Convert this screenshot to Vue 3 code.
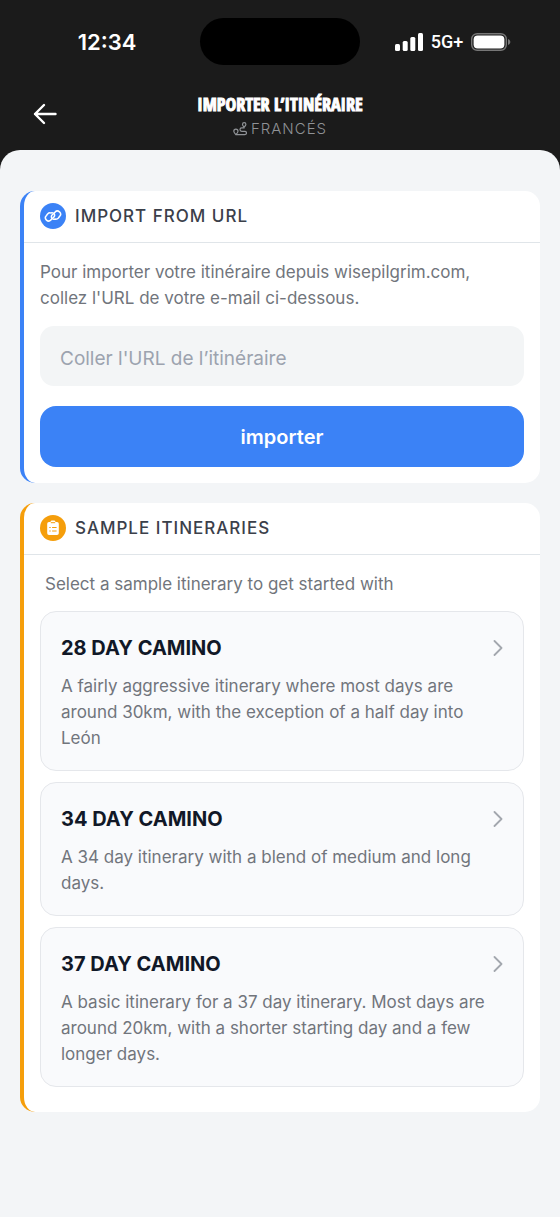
<script setup>
import { ref } from 'vue'

const url = ref('')
const samples = [
  {
    title: '28 DAY CAMINO',
    text: 'A fairly aggressive itinerary where most days are around 30km, with the exception of a half day into León',
  },
  {
    title: '34 DAY CAMINO',
    text: 'A 34 day itinerary with a blend of medium and long days.',
  },
  {
    title: '37 DAY CAMINO',
    text: 'A basic itinerary for a 37 day itinerary. Most days are around 20km, with a shorter starting day and a few longer days.',
  },
]
</script>

<template>
  <div class="screen">
    <div class="status">
      <div class="side clock"><span class="time">12:34</span></div>
      <div class="island"></div>
      <div class="side indicators">
        <svg width="28" height="18" viewBox="0 0 28 18" fill="#fff" aria-hidden="true">
          <rect x="0" y="11" width="5" height="7" rx="1.5" />
          <rect x="7.7" y="8" width="5" height="10" rx="1.5" />
          <rect x="15.3" y="4" width="5" height="14" rx="1.5" />
          <rect x="23" y="0" width="5" height="18" rx="1.5" />
        </svg>
        <span class="network">5G+</span>
        <svg width="40" height="18" viewBox="0 0 40 18" aria-hidden="true">
          <rect x="0.7" y="0.7" width="34.6" height="16.6" rx="5.5" fill="none" stroke="#777" stroke-width="1.4" />
          <rect x="2.6" y="2.6" width="30.8" height="12.8" rx="4" fill="#fff" />
          <path d="M37 6c1.500.5 2.300 1.600 2.300 3s-.8 2.500-2.300 3z" fill="#777" />
        </svg>
      </div>
    </div>

    <header class="nav">
      <button class="back" type="button" aria-label="Retour">
        <svg width="24" height="22" viewBox="0 0 24 22" fill="none" stroke="#fff" stroke-width="2.400" stroke-linecap="round" stroke-linejoin="round">
          <path d="M22.500 11H2M11 2 2 11l9 9" />
        </svg>
      </button>
      <div class="heading">
        <h1>IMPORTER L’ITINÉRAIRE</h1>
        <p class="route">
          <svg width="14" height="14" viewBox="0 0 14 14" fill="none" stroke="#8f9296" stroke-width="1.200" stroke-linecap="round" stroke-linejoin="round" aria-hidden="true">
            <path d="M11.100 5.200c-1-1.200-1.600-1.900-1.600-2.800a1.700 1.700 0 0 1 3.400 0c0 .9-.7 1.600-1.800 2.800zM2.900 12.700C1.600 11.200.8 10.300.8 9.200a2.100 2.100 0 0 1 4.200 0c0 1.100-.8 2-2.100 3.500zh8.900a1.700 1.700 0 0 0 0-3.400H8.700a1.700 1.700 0 0 1 0-3.400h2.400" />
          </svg>
          <span>FRANCÉS</span>
        </p>
      </div>
    </header>

    <main class="sheet">
      <section class="card blue">
        <div class="card-head">
          <span class="badge">
            <svg width="18" height="18" viewBox="0 0 18 18" fill="none" stroke="#fff" stroke-width="1.500" stroke-linecap="round" aria-hidden="true">
              <path d="M8.300 5.700 6.500 5.900A3.300 3.300 0 0 0 3.600 7L2.300 8.700a3.100 3.100 0 0 0 4.600 4.200l2.600-2.400a3.100 3.100 0 0 0 .2-4.300" />
              <path d="m9.700 12.300 1.800-.2a3.300 3.300 0 0 0 2.900-1.100l1.300-1.700a3.100 3.100 0 0 0-4.600-4.200L8.500 7.500a3.100 3.100 0 0 0-.2 4.300" />
            </svg>
          </span>
          <h2>IMPORT FROM URL</h2>
        </div>
        <form class="card-body" @submit.prevent>
          <label for="url">Pour importer votre itinéraire depuis wisepilgrim.com, collez l'URL de votre e-mail ci-dessous.</label>
          <input id="url" v-model="url" type="text" placeholder="Coller l'URL de l’itinéraire" />
          <button class="submit" type="submit">importer</button>
        </form>
      </section>

      <section class="card amber">
        <div class="card-head">
          <span class="badge">
            <svg width="18" height="18" viewBox="0 0 18 18" aria-hidden="true">
              <path d="M5 3h1.500c0-1 .8-1.500 1.500-1.500h2c.7 0 1.500.5 1.500 1.500H13a1.800 1.800 0 0 1 1.800 1.800v9.400A1.800 1.800 0 0 1 13 16H5a1.800 1.800 0 0 1-1.800-1.800V4.800A1.800 1.800 0 0 1 5 3z" fill="#fff" />
              <path d="M7.200 3.700h3.600M8.500 8.500h3.700M8.500 12h3.700M5.700 8.500h.6M5.700 12h.6" fill="none" stroke="#f59e0b" stroke-width="1" stroke-linecap="round" />
            </svg>
          </span>
          <h2>SAMPLE ITINERARIES</h2>
        </div>
        <div class="card-body samples">
          <p class="hint">Select a sample itinerary to get started with</p>
          <button v-for="s in samples" :key="s.title" class="sample" type="button">
            <span class="sample-title">
              <span>{{ s.title }}</span>
              <svg width="10" height="16" viewBox="0 0 10 16" fill="none" stroke="#a3a7ae" stroke-width="1.800" stroke-linecap="round" stroke-linejoin="round" aria-hidden="true">
                <path d="m1.500 1 7 7-7 7" />
              </svg>
            </span>
            <span class="sample-text">{{ s.text }}</span>
          </button>
        </div>
      </section>
    </main>
  </div>
</template>

<style>
body {
  background: #1b1b1b;
}
</style>

<style scoped>
* {
  box-sizing: border-box;
}

.screen {
  display: flex;
  flex-direction: column;
  min-height: 100vh;
  background: #1b1b1b;
  font-family: Inter, "Liberation Sans", sans-serif;
}

h1,
h2,
p {
  margin: 0;
}

button,
input {
  font-family: inherit;
  border: 0;
}

button {
  cursor: pointer;
}

.status {
  display: flex;
  align-items: center;
  padding-top: 18px;
  color: #fff;
}

.side {
  flex: 1;
  display: flex;
  align-items: center;
  justify-content: center;
}

.clock {
  padding-left: 14px;
}

.time {
  font-size: 22px;
  font-weight: 600;
}

.island {
  width: 160px;
  height: 47px;
  border-radius: 24px;
  background: #000;
}

.indicators {
  gap: 8px;
  padding-right: 14px;
}

.network {
  font-family: Roboto, sans-serif;
  font-size: 18px;
  font-weight: 500;
}

.nav {
  display: grid;
  grid-template-columns: 46px 1fr 46px;
  align-items: start;
  padding: 26px 22px 9px;
}

.back {
  display: flex;
  align-items: center;
  justify-content: center;
  height: 46px;
  padding: 0;
  background: none;
}

.heading {
  text-align: center;
}

h1 {
  color: #fff;
  font-family: "Open Sans Condensed", "Roboto Condensed", "Liberation Sans Narrow", "Liberation Sans", sans-serif;
  font-size: 18px;
  font-weight: 700;
  line-height: 26px;
  white-space: nowrap;
  -webkit-text-stroke: 1px #fff;
}

.route {
  display: flex;
  align-items: center;
  justify-content: center;
  gap: 4px;
  color: #8f9296;
  font-size: 15px;
  font-weight: 300;
  line-height: 24px;
  letter-spacing: 1px;
}

.sheet {
  flex: 1;
  display: flex;
  flex-direction: column;
  gap: 20px;
  padding: 41px 20px;
  border-radius: 20px 20px 0 0;
  background: #f3f5f7;
}

.card {
  border-left: 4px solid;
  border-radius: 15px;
  background: #fff;
}

.blue {
  border-color: #3b82f6;
}

.amber {
  border-color: #f59e0b;
}

.card-head {
  display: flex;
  align-items: center;
  gap: 9px;
  padding: 12px 16px 13px;
  border-bottom: 1px solid #e0e5e9;
}

.badge {
  display: flex;
  align-items: center;
  justify-content: center;
  width: 26px;
  height: 26px;
  border-radius: 50%;
}

.blue .badge {
  background: #3b82f6;
}

.amber .badge {
  background: #f59e0b;
}

h2 {
  color: #3b404a;
  font-size: 17px;
  font-weight: 500;
  line-height: 26px;
  letter-spacing: 1px;
}

.card-body {
  display: flex;
  flex-direction: column;
  padding: 16px;
  color: #71757c;
  font-size: 17px;
  line-height: 26px;
}

label {
  padding-right: 24px;
}

input {
  width: 100%;
  height: 60px;
  margin: 15px 0 20px;
  padding: 4px 20px 0;
  border-radius: 14px;
  background: #f3f5f6;
  color: #374151;
  font-size: 19px;
}

input::placeholder {
  color: #9ca3af;
  opacity: 1;
}

.submit {
  height: 61px;
  border-radius: 16px;
  background: #3b82f6;
  color: #fff;
  font-size: 20px;
  font-weight: 600;
}

.samples {
  gap: 11px;
  padding-bottom: 25px;
}

.hint {
  padding: 0 5px 3px;
}

.sample {
  display: flex;
  flex-direction: column;
  gap: 9px;
  padding: 20px 20px 19px;
  border: 1px solid #e5e7eb;
  border-radius: 16px;
  background: #f9fafc;
  text-align: left;
}

.sample-title {
  display: flex;
  align-items: center;
  justify-content: space-between;
  width: 100%;
  color: #111827;
  font-size: 20px;
  font-weight: 700;
  line-height: 32px;
}

.sample-text {
  color: #71757c;
  font-size: 17px;
  line-height: 26px;
}
</style>
